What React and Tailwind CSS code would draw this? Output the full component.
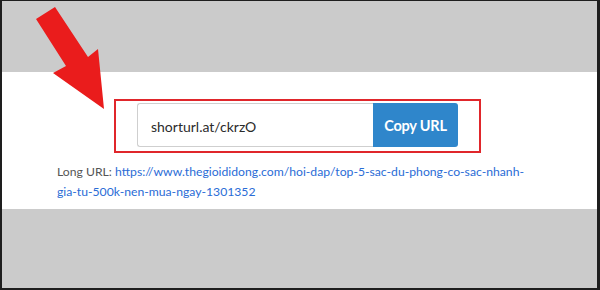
export default function App() {
  return (
    <div className="relative w-[600px] h-[290px] overflow-hidden bg-[#cbcbcb] border-t border-l-2 border-r-[3px] border-b-2 border-[#1e1e1e] font-['Lato',sans-serif]">
      <div className="h-[71px]" />
      <div className="h-[137px] bg-white pt-[27px]">
        <div className="ml-[112px] w-[367px] h-[54px] border-2 border-[#e0262b] flex items-start pl-[21px] pt-[2px]">
          <div className="w-[236px] h-[44px] border border-[#cfcfcf] border-r-0 rounded-l-[3px] flex items-center pl-[13px] pt-[2px] text-[14px] text-[#2b2b2b]">
            shorturl.at/ckrzO
          </div>
          <button className="w-[85px] h-[44px] bg-[#2f86cb] rounded-r-[3px] text-white font-bold text-[14.5px] tracking-[-0.2px] flex items-center justify-center pt-[2px]">
            Copy URL
          </button>
        </div>
        <p className="mt-[9px] ml-[55px] w-[480px] text-[12.2px] leading-[20px] text-[#555]">
          Long URL:{' '}
          <a className="text-[#2a6cd6]">
            https://www.thegioididong.com/hoi-dap/top-5-sac-du-phong-co-sac-nhanh-gia-tu-500k-nen-mua-ngay-1301352
          </a>
        </p>
      </div>
      <svg className="absolute left-0 top-0" width="120" height="120" viewBox="0 0 120 120">
        <polygon points="34,18 53,6 86,56 96,48 102,108 51,72 64,65" fill="#ea1c1c" />
      </svg>
    </div>
  )
}
